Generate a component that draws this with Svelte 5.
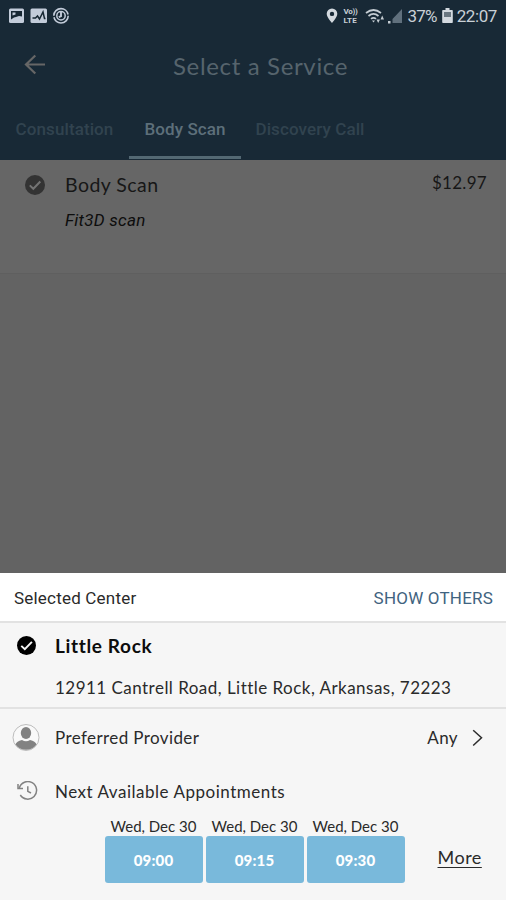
<script lang="ts">
	type Slot = { date: string; time: string };

	const tabs = ['Consultation', 'Body Scan', 'Discovery Call'];
	let active = $state('Body Scan');

	const slots: Slot[] = [
		{ date: 'Wed, Dec 30', time: '09:00' },
		{ date: 'Wed, Dec 30', time: '09:15' },
		{ date: 'Wed, Dec 30', time: '09:30' },
	];
</script>

<div class="screen">
	<div class="status">
		<svg class="notifs" width="64" height="18" viewBox="0 0 64 18">
			<rect x="1" y="1.5" width="15" height="14.500" rx="1.5" fill="#c3ccda" />
			<path d="M3 4h11v5.500l-3-.5-3 1-2 .5-3 2z" fill="#172733" />
			<path d="M4.500 5.500h3v2l-3 1z" fill="#c3ccda" />
			<rect x="22.500" y="1.500" width="16.500" height="14.500" rx="1.5" fill="#c3ccda" />
			<path d="M24.500 11h3l2-2 2 3 3.500-7 1.500 6.500h1" fill="none" stroke="#172733" stroke-width="1.5" />
			<circle cx="53" cy="8.800" r="7.200" fill="none" stroke="#c3ccda" stroke-width="1.600" stroke-dasharray="21 1.600" />
			<circle cx="53" cy="8.800" r="4.200" fill="none" stroke="#c3ccda" stroke-width="1.500" />
			<path d="M53 4v5.200l-2.200 1" fill="none" stroke="#c3ccda" stroke-width="1.900" />
		</svg>
		<div class="system">
			<svg width="12" height="16" viewBox="0 0 12 16">
				<path d="M6 .5A5.300 5.300 0 0 0 .7 5.800C.7 9.500 6 15 6 15s5.300-5.500 5.300-9.200A5.300 5.300 0 0 0 6 .5zm0 3.200a2.200 2.200 0 1 1 0 4.400 2.200 2.200 0 0 1 0-4.400z" fill="#d3d9df" fill-rule="evenodd" />
			</svg>
			<span class="volte"><span>Vo))</span><span class="lte">LTE</span></span>
			<svg width="20" height="16" viewBox="0 0 20 16">
				<g fill="none" stroke="#c5cdd3" stroke-width="1.700">
					<path d="M1 5Q8.500-1 16 5" />
					<path d="M3.500 8Q8.500 3.800 13.500 8" />
					<path d="M6 10.800Q8.500 8.800 11 10.800" />
				</g>
				<path d="M7 12.500h3l-1.500 2zM11.500 11.500h3.500l-1.800 3.500zM15.500 11.500l1.700-4 1.800 4z" fill="#c5cdd3" />
			</svg>
			<svg class="signal" width="16" height="15" viewBox="0 0 16 15">
				<path d="M15 0v14H5.500V10z" fill="#60707d" />
				<rect x="1" y="12" width="2.500" height="2.500" fill="#c5cdd3" />
			</svg>
			<span class="pct">37%</span>
			<svg class="battery" width="11" height="16" viewBox="0 0 11 16">
				<path d="M3.500 0h4v2H10q.8 0 .8.800v11.400q0 .8-.8.800H1q-.8 0-.8-.8V2.800Q.2 2 1 2h2.500z" fill="#d3d9df" />
				<path d="M2 4h7v5H2z" fill="#697680" />
			</svg>
			<span class="clock">22:07</span>
		</div>
	</div>

	<header>
		<svg class="back" width="22" height="22" viewBox="0 0 22 22" fill="none" stroke="#666" stroke-width="2.200">
			<path d="M21 10.500H2.500M11.300 1.500L2 10.500l9.300 9" />
		</svg>
		<h1>Select a Service</h1>
	</header>

	<nav>
		{#each tabs as tab}
			<button class="tab" class:active={active === tab} onclick={() => (active = tab)}>
				<span class="tab-label">{tab}</span>
			</button>
		{/each}
	</nav>

	<section class="service">
		<svg width="20" height="20" viewBox="0 0 20 20">
			<circle cx="10" cy="10" r="10" fill="#333" />
			<path d="M4.800 10.400l3.500 3.400 7-7.300" fill="none" stroke="#747474" stroke-width="2" />
		</svg>
		<div class="service-info">
			<span class="service-name">Body Scan</span>
			<em>Fit3D scan</em>
		</div>
		<span class="price">$12.97</span>
	</section>

	<div class="sheet">
		<div class="sheet-head">
			<span class="selected">Selected Center</span>
			<span class="others">SHOW OTHERS</span>
		</div>

		<div class="center">
			<div class="row name-row">
				<span class="icon">
					<svg width="19" height="19" viewBox="0 0 20 20">
						<circle cx="10" cy="10" r="10" fill="#000" />
						<path d="M4.500 10.400l3.700 3.400 7.500-7.600" fill="none" stroke="#f6f6f6" stroke-width="2.100" />
					</svg>
				</span>
				<strong>Little Rock</strong>
			</div>
			<p class="address">12911 Cantrell Road, Little Rock, Arkansas, 72223</p>
		</div>

		<div class="row provider">
			<span class="icon">
				<svg width="28" height="28" viewBox="0 0 28 28">
					<circle cx="14" cy="13.500" r="13" fill="#f9f9f9" stroke="#b5b5b5" stroke-width="0.900" />
					<ellipse cx="14" cy="9" rx="5.200" ry="6" fill="#828282" />
					<path d="M3.500 20.500Q4.500 17 10 16Q14 18.500 18 16Q23.500 17 24.500 20.500A13 13 0 0 1 3.500 20.500z" fill="#828282" />
				</svg>
			</span>
			<span class="preferred">Preferred Provider</span>
			<span class="any">Any</span>
			<svg class="chevron" width="11" height="18" viewBox="0 0 11 18" fill="none" stroke="#2c2c2c" stroke-width="1.500">
				<path d="M1.200 1.200L9.500 8.700 1.200 16.500" />
			</svg>
		</div>

		<div class="row next">
			<span class="icon">
				<svg class="history" width="21" height="20" viewBox="0 0 21 20" fill="none" stroke="#828282" stroke-width="1.500">
					<path d="M2.300 7A8.800 8.800 0 1 1 3.300 14" />
					<path d="M1 3v4.500h5M10.800 5.300v5l3.200 1.700" />
				</svg>
			</span>
			<span class="appointments">Next Available Appointments</span>
		</div>

		<div class="slots">
			{#each slots as slot}
				<div class="slot">
					<span class="date">{slot.date}</span>
					<button class="time">{slot.time}</button>
				</div>
			{/each}
			<span class="more">More</span>
		</div>
	</div>
</div>

<style>
	:global(body) {
		margin: 0;
	}
	.screen {
		display: flex;
		flex-direction: column;
		width: 506px;
		height: 900px;
		overflow: hidden;
		background: #636363;
		color: #2a2a2a;
		font-family: Lato, 'Open Sans', sans-serif;
		white-space: nowrap;
	}
	button {
		padding: 0;
		border: 0;
		font: inherit;
	}
	svg {
		display: block;
		flex: none;
	}
	.status {
		display: flex;
		justify-content: space-between;
		align-items: center;
		height: 32px;
		padding: 0 9px 0 8px;
		background: #182936;
		color: #c9d0d6;
		font: 17px/32px Roboto, sans-serif;
	}
	.notifs {
		margin-top: -1px;
	}
	.system {
		display: flex;
		align-items: center;
	}
	.volte {
		display: flex;
		flex-direction: column;
		width: 16px;
		margin: 0 6px 0 5px;
		font-size: 8px;
		font-weight: 700;
		line-height: 9px;
		letter-spacing: -0.3px;
	}
	.lte {
		letter-spacing: 0.2px;
	}
	.signal {
		margin-left: 2px;
	}
	.pct {
		margin-left: 4px;
		letter-spacing: -0.8px;
	}
	.battery {
		margin: 0 4px 0 5px;
	}
	.clock {
		letter-spacing: -0.4px;
	}
	header {
		display: grid;
		grid-template-columns: 48px 1fr 48px;
		align-items: center;
		height: 66px;
		background: #182936;
	}
	.back {
		margin-left: 24px;
	}
	h1 {
		margin: 0;
		padding-left: 15px;
		color: #56646d;
		font-size: 24px;
		font-weight: 400;
		letter-spacing: 0.65px;
		text-align: center;
	}
	nav {
		display: flex;
		height: 62px;
		background: #182936;
	}
	.tab {
		display: flex;
		justify-content: center;
		box-sizing: border-box;
		border-bottom: 3px solid transparent;
		margin-bottom: 1px;
		background: none;
		color: #31434f;
		font: 500 17px/63px Roboto, sans-serif;
		letter-spacing: 0.1px;
	}
	.tab:nth-child(1) {
		width: 129px;
	}
	.tab:nth-child(2) {
		width: 112px;
	}
	.tab:nth-child(3) {
		width: 138px;
	}
	.tab.active {
		border-color: #536873;
		color: #5d6f7a;
	}
	.service {
		display: flex;
		align-items: flex-start;
		box-sizing: border-box;
		height: 114px;
		padding: 15px 19px 0 25px;
		border-bottom: 1px solid #5f5f5f;
		background: #666;
		color: #171717;
	}
	.service-info {
		display: flex;
		flex: 1;
		flex-direction: column;
		margin-left: 20px;
	}
	.service-name {
		font-size: 19.5px;
		line-height: 20px;
		letter-spacing: 0.45px;
	}
	em {
		margin-top: 15px;
		font: italic 17px/20px Roboto, sans-serif;
		letter-spacing: 0.25px;
		color: #0d0d0d;
	}
	.price {
		font-size: 17px;
		line-height: 16px;
		letter-spacing: 0.3px;
	}
	.sheet {
		display: flex;
		flex-direction: column;
		height: 327px;
		margin-top: auto;
		background: #f6f6f6;
	}
	.sheet-head {
		display: flex;
		justify-content: space-between;
		height: 48px;
		padding: 0 13px 0 14px;
		border-bottom: 2px solid #e2e2e2;
		background: #fff;
		font: 17px/50px Roboto, sans-serif;
		letter-spacing: 0.2px;
	}
	.others {
		color: #3f6380;
	}
	.center {
		height: 84px;
		border-bottom: 2px solid #e2e2e2;
	}
	.row {
		display: flex;
		align-items: center;
		font-size: 17px;
	}
	.icon {
		display: flex;
		justify-content: center;
		width: 52px;
		margin-right: 3px;
	}
	.name-row {
		height: 44px;
	}
	strong {
		color: #0c0c0c;
		font-size: 19px;
		font-weight: 700;
		letter-spacing: 0.65px;
	}
	.address {
		margin: 10px 0 0 55px;
		font-size: 17px;
		line-height: 22px;
		letter-spacing: 0.47px;
	}
	.provider {
		height: 57px;
	}
	.preferred {
		flex: 1;
		letter-spacing: 0.4px;
	}
	.any {
		letter-spacing: 0.4px;
	}
	.chevron {
		margin: 0 23px 0 14px;
	}
	.next {
		height: 50px;
	}
	.appointments {
		letter-spacing: 0.52px;
	}
	.history {
		margin-left: 3px;
	}
	.slots {
		display: flex;
		gap: 3px;
		margin-left: 104.5px;
	}
	.slot {
		display: flex;
		flex-direction: column;
		width: 98px;
		text-align: center;
	}
	.date {
		font-size: 15px;
		line-height: 20px;
	}
	.time {
		height: 47px;
		border-radius: 3px;
		background: #79b9db;
		color: #fff;
		font-size: 15px;
		font-weight: 900;
		letter-spacing: 0.15px;
	}
	.more {
		margin: 29px 0 0 30px;
		font-size: 18px;
		line-height: 24px;
		letter-spacing: 0.5px;
		text-decoration: underline;
		text-underline-offset: 3px;
		text-decoration-thickness: 1px;
	}
</style>
